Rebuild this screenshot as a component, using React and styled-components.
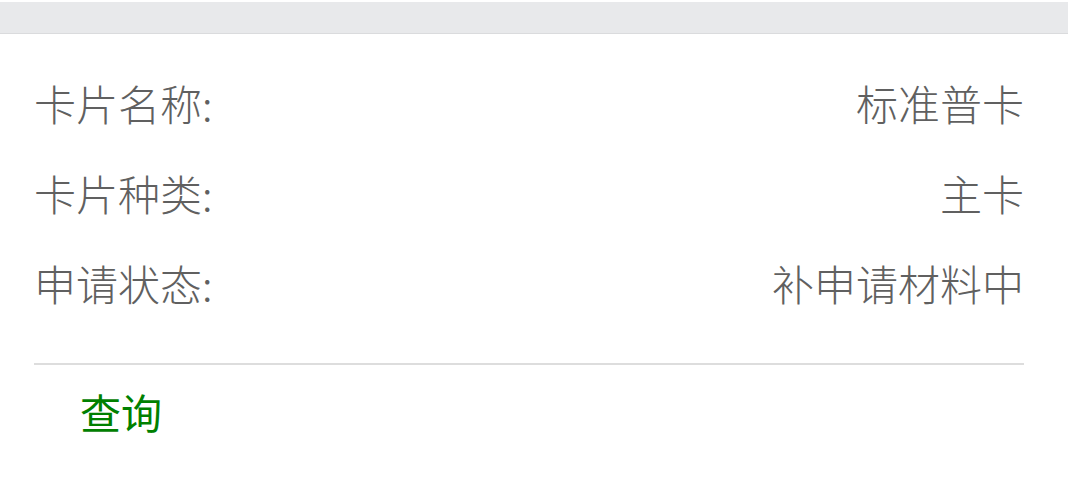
import React from "react";
import styled, { createGlobalStyle } from "styled-components";

const Global = createGlobalStyle`
  html, body { margin: 0; padding: 0; background: #ffffff; }
  body { font-family: "Noto Sans CJK SC", "Noto Sans", sans-serif; }
`;

const Page = styled.div`
  width: 1068px;
  height: 504px;
  background: #ffffff;
  padding-top: 2px;
  box-sizing: border-box;
`;

const TopBar = styled.div`
  height: 31px;
  background: #e8e9eb;
  border-bottom: 1px solid #dadbdd;
`;

const Card = styled.div`
  padding: 24px 44px 0 34px;
`;

const InfoRow = styled.div`
  display: flex;
  justify-content: space-between;
  align-items: center;
  height: 90px;
  font-size: 42px;
  font-weight: 300;
  color: #606060;
  line-height: 1;
`;

const Divider = styled.div`
  margin-top: 35px;
  height: 2px;
  background: #dddddd;
`;

const Actions = styled.div`
  display: flex;
  padding: 26px 0 0 46px;
`;

const QueryLink = styled.a`
  font-size: 41px;
  font-weight: 400;
  line-height: 1;
  color: #008000;
  text-decoration: none;
  cursor: pointer;
`;

const rows = [
  ["卡片名称:", "标准普卡"],
  ["卡片种类:", "主卡"],
  ["申请状态:", "补申请材料中"],
];

export default function App() {
  return (
    <>
      <Global />
      <Page>
        <TopBar />
        <Card>
          {rows.map(([k, v]) => (
            <InfoRow key={k}>
              <span>{k}</span>
              <span>{v}</span>
            </InfoRow>
          ))}
          <Divider />
          <Actions>
            <QueryLink>查询</QueryLink>
          </Actions>
        </Card>
      </Page>
    </>
  );
}
